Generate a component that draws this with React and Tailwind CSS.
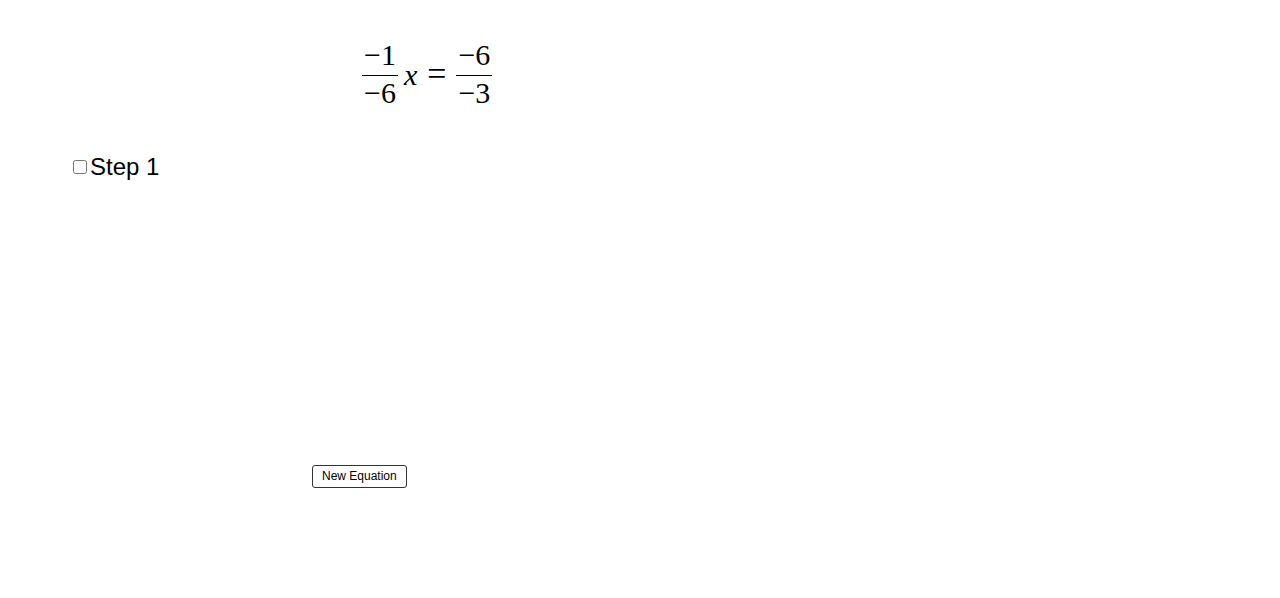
import React, { useState } from 'react';

const Frac = ({ top, bottom }) => (
  <span className="inline-flex flex-col items-center">
    <span className="px-[2px] leading-[30px]">{top}</span>
    <span className="h-[1px] w-full bg-black mt-[5px] mb-[2px]"></span>
    <span className="px-[2px] leading-[30px]">{bottom}</span>
  </span>
);

const App = () => {
  const [checked, setChecked] = useState(false);

  return (
    <div className="w-[1280px] h-[598px] bg-white overflow-hidden" style={{ fontFamily: '"Liberation Sans", Arial, sans-serif' }}>
      {/* Equation */}
      <div className="pl-[362px] pt-[40px] h-[150px]">
        <div
          className="inline-flex items-center gap-[6px] text-[30px] text-black"
          style={{ fontFamily: '"Liberation Serif", "DejaVu Serif", serif' }}
        >
          <Frac top="−1" bottom="−6" />
          <span className="italic">x</span>
          <span className="mx-[4px] text-[34px] leading-[30px]">=</span>
          <Frac top="−6" bottom="−3" />
        </div>
      </div>

      {/* Step checkbox */}
      <label className="flex items-center gap-[3px] pl-[73px] mt-[2px] w-fit">
        <input
          type="checkbox"
          checked={checked}
          onChange={() => setChecked(!checked)}
          className="w-[14px] h-[14px] m-0 accent-gray-600"
        />
        <span className="text-[24px] text-black leading-[30px]">Step 1</span>
      </label>

      {/* New equation button */}
      <div className="pl-[312px] pt-[281px]">
        <button className="h-[23px] px-[9px] border border-[#333] rounded-[3px] bg-white text-[12px] text-black leading-none">
          New Equation
        </button>
      </div>
    </div>
  );
};

export default App;
